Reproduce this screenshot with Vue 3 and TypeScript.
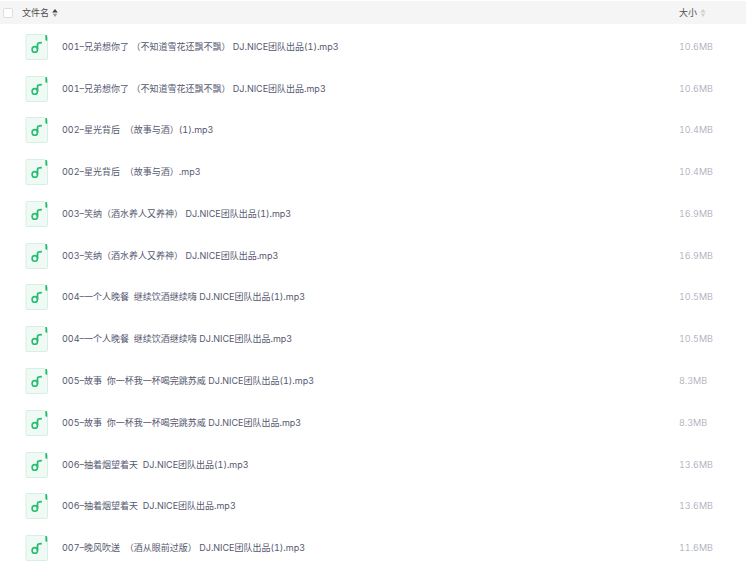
<script setup lang="ts">
import { computed, ref } from 'vue'

interface AudioFile {
  name: string
  size: number
}

type SortKey = 'name' | 'size'

const files: AudioFile[] = [
  { name: '001–兄弟想你了 （不知道雪花还飘不飘） DJ.NICE团队出品(1).mp3', size: 10.6 },
  { name: '001–兄弟想你了 （不知道雪花还飘不飘） DJ.NICE团队出品.mp3', size: 10.6 },
  { name: '002–星光背后  （故事与酒）(1).mp3', size: 10.4 },
  { name: '002–星光背后  （故事与酒）.mp3', size: 10.4 },
  { name: '003–笑纳（酒水养人又养神） DJ.NICE团队出品(1).mp3', size: 16.9 },
  { name: '003–笑纳（酒水养人又养神） DJ.NICE团队出品.mp3', size: 16.9 },
  { name: '004–一个人晚餐  继续饮酒继续嗨 DJ.NICE团队出品(1).mp3', size: 10.5 },
  { name: '004–一个人晚餐  继续饮酒继续嗨 DJ.NICE团队出品.mp3', size: 10.5 },
  { name: '005–故事  你一杯我一杯喝完跳苏威 DJ.NICE团队出品(1).mp3', size: 8.3 },
  { name: '005–故事  你一杯我一杯喝完跳苏威 DJ.NICE团队出品.mp3', size: 8.3 },
  { name: '006–抽着烟望着天  DJ.NICE团队出品(1).mp3', size: 13.6 },
  { name: '006–抽着烟望着天  DJ.NICE团队出品.mp3', size: 13.6 },
  { name: '007–晚风吹送  （酒从眼前过版） DJ.NICE团队出品(1).mp3', size: 11.6 },
]

const allSelected = ref(false)
const sortKey = ref<SortKey>('name')
const ascending = ref(true)

// The list arrives in ascending name order, so its index stands for the name.
const rows = computed(() => {
  const list = [...files]
  if (sortKey.value === 'size') list.sort((a, b) => a.size - b.size)
  return ascending.value ? list : list.reverse()
})

function sortBy(key: SortKey) {
  ascending.value = sortKey.value === key ? !ascending.value : true
  sortKey.value = key
}
</script>

<template>
  <main class="page">
    <table class="files">
      <thead>
        <tr>
          <th class="pick" scope="col">
            <input v-model="allSelected" class="check" type="checkbox" aria-label="全选" />
          </th>
          <th scope="col">
            <button class="sort" type="button" @click="sortBy('name')">
              文件名
              <svg class="arrows" :class="{ active: sortKey === 'name' }" viewBox="0 0 6 8" aria-hidden="true">
                <path class="up" d="M3 0L5.8 3.4H0.2Z" />
                <path class="down" d="M3 8L0.8 4.8H5.2Z" />
              </svg>
            </button>
          </th>
          <th class="size" scope="col">
            <button class="sort" type="button" @click="sortBy('size')">
              大小
              <svg class="arrows" :class="{ active: sortKey === 'size' }" viewBox="0 0 6 8" aria-hidden="true">
                <path class="up" d="M3 0L5.8 3.4H0.2Z" />
                <path class="down" d="M3 8L0.8 4.8H5.2Z" />
              </svg>
            </button>
          </th>
        </tr>
      </thead>
      <tbody>
        <tr v-for="file in rows" :key="file.name">
          <td class="pick"></td>
          <td>
            <div class="file">
              <svg class="icon" viewBox="0 0 24 26" aria-hidden="true">
                <path d="M2 0.5H19.5L22.5 3.5V24.5Q22.5 25.5 21.5 25.5H2Q1 25.5 1 24.5V1.5Q1 0.5 2 0.5Z" fill="#effaf5" stroke="#d6efe5" />
                <path d="M20.4 1H21.4Q22.2 1 22.2 2V6.8H21.6Q20.4 6.8 20.4 5.6Z" fill="#25b96b" />
                <ellipse cx="9.8" cy="15.4" rx="2.7" ry="2.8" fill="none" stroke="#27bd70" stroke-width="1.6" />
                <path d="M12.5 15.6V10.6Q12.5 9 14.1 8.9L16.9 8.6" fill="none" stroke="#27bd70" stroke-width="1.8" />
              </svg>
              <span class="name">{{ file.name }}</span>
            </div>
          </td>
          <td class="size amount">{{ file.size.toFixed(1) }}MB</td>
        </tr>
      </tbody>
    </table>
  </main>
</template>

<style>
body {
  margin: 0;
  background: #fff;
}
</style>

<style scoped>
.page {
  padding-top: 1px;
  font-family: Inter, "Noto Sans CJK SC", sans-serif;
  font-size: 9px;
  font-variant-numeric: tabular-nums;
  line-height: 14px;
  color: #55586f;
}

.files {
  width: 100%;
  height: calc(100vh - 8px);
  border-collapse: separate;
  border-spacing: 0;
}

th,
td {
  padding: 0;
  text-align: left;
  vertical-align: middle;
  font-weight: 400;
}

th {
  height: 23px;
  background: #f5f5f5;
  background-clip: padding-box;
  border-bottom: 2px solid transparent;
}

.pick {
  width: 22px;
}

.size {
  width: 67px;
  padding-left: 1px;
}

.check {
  display: block;
  box-sizing: border-box;
  width: 10px;
  height: 10px;
  margin: 0 0 0 3px;
  appearance: none;
  background: #fff;
  border: 1px solid #dedede;
  border-radius: 2px;
}

.check:checked {
  background: #27bd70;
  border-color: #27bd70;
}

.sort {
  display: flex;
  align-items: center;
  gap: 3px;
  padding: 0;
  border: 0;
  background: none;
  font: inherit;
  line-height: 14px;
  color: #505050;
  cursor: pointer;
}

.arrows {
  width: 6px;
  height: 8px;
  fill: #d2d2d2;
}

.arrows.active .up {
  fill: #444;
}

.arrows.active .down {
  fill: #999;
}

.file {
  display: flex;
  align-items: center;
  gap: 13px;
  padding-left: 3px;
}

.icon {
  flex: none;
  width: 24px;
  height: 26px;
}

.name {
  white-space: pre;
}

.amount {
  font-weight: 300;
  color: #a0a2b2;
}
</style>
